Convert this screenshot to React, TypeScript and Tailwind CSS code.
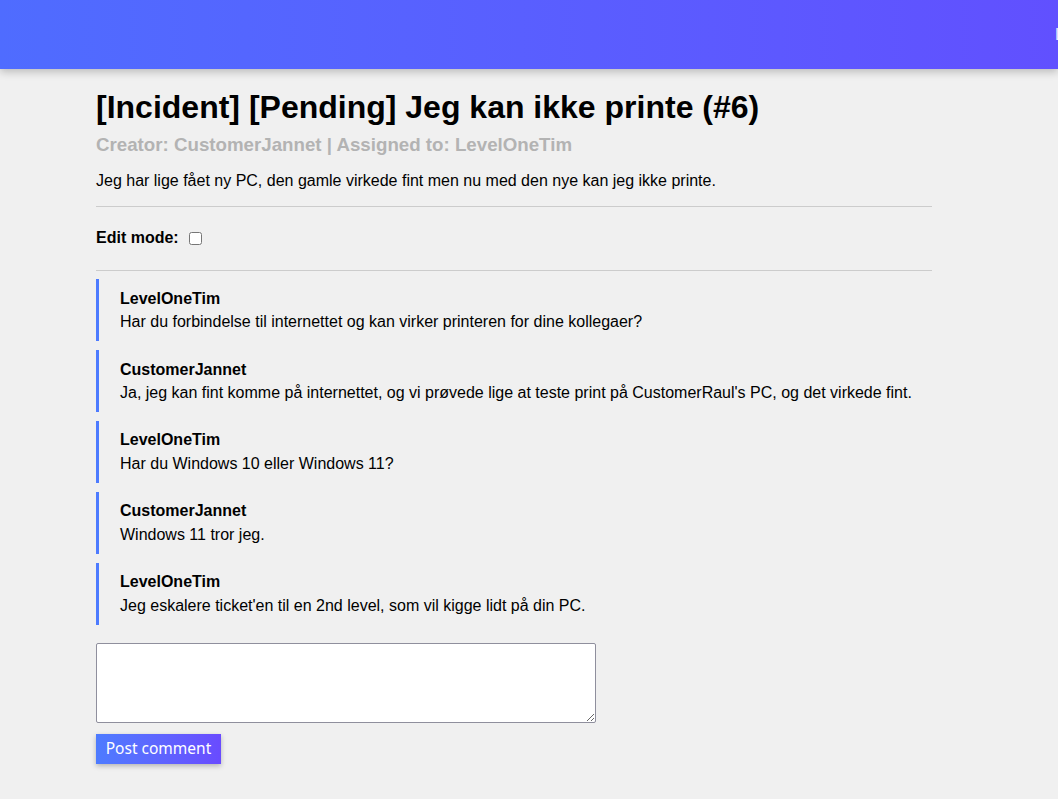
import React, { useState } from "react";

type Comment = {
  author: string;
  text: string;
};

const comments: Comment[] = [
  {
    author: "LevelOneTim",
    text: "Har du forbindelse til internettet og kan virker printeren for dine kollegaer?",
  },
  {
    author: "CustomerJannet",
    text: "Ja, jeg kan fint komme på internettet, og vi prøvede lige at teste print på CustomerRaul's PC, og det virkede fint.",
  },
  { author: "LevelOneTim", text: "Har du Windows 10 eller Windows 11?" },
  { author: "CustomerJannet", text: "Windows 11 tror jeg." },
  {
    author: "LevelOneTim",
    text: "Jeg eskalere ticket'en til en 2nd level, som vil kigge lidt på din PC.",
  },
];

const App = () => {
  const [editMode, setEditMode] = useState<boolean>(false);
  const [newComment, setNewComment] = useState<string>("");

  return (
    <div className="min-h-screen bg-[#f0f0f0] font-['Liberation_Sans',Arial,sans-serif] text-black overflow-hidden">
      <header className="h-[69px] flex items-center overflow-hidden bg-gradient-to-r from-[#4f6cff] to-[#6150ff] shadow-[0_3px_8px_rgba(0,0,0,0.22)]">
        <nav className="ml-auto mr-[-46px] whitespace-nowrap text-[16px] text-[#e6ecff]">
          Logout
        </nav>
      </header>

      <main className="ml-[96px] w-[836px] pt-[20px] pb-[36px]">
        <h1 className="text-[32px] leading-[37px] font-bold">
          [Incident] [Pending] Jeg kan ikke printe (#6)
        </h1>
        <h3 className="mt-[8px] text-[18.72px] leading-[21px] font-bold text-[#b3b3b3]">
          Creator: CustomerJannet | Assigned to: LevelOneTim
        </h3>
        <p className="mt-[17px] text-[16px] leading-[18px]">
          Jeg har lige fået ny PC, den gamle virkede fint men nu med den nye kan jeg ikke printe.
        </p>

        <hr className="mt-[16px] border-t border-[#cccccc]" />

        <div className="mt-[22px] flex items-center h-[18px]">
          <label htmlFor="edit-mode" className="text-[16px] font-bold">
            Edit mode:
          </label>
          <input
            id="edit-mode"
            type="checkbox"
            checked={editMode}
            onChange={(e) => setEditMode(e.target.checked)}
            className="ml-[10px] w-[13px] h-[13px]"
          />
        </div>

        <hr className="mt-[23px] border-t border-[#cccccc]" />

        <div className="mt-[8px] flex flex-col gap-[9px]">
          {comments.map((comment, i) => (
            <div
              key={i}
              className="border-l-[3px] border-[#4d7bff] pl-[21px] pt-[10.6px] pb-[9.5px]"
            >
              <div className="text-[16px] leading-[18.4px] font-bold">{comment.author}</div>
              <div className="mt-[5px] text-[16px] leading-[18.4px]">{comment.text}</div>
            </div>
          ))}
        </div>

        <textarea
          value={newComment}
          onChange={(e) => setNewComment(e.target.value)}
          className="mt-[18px] block w-[500px] h-[80px] bg-white border border-[#8f8f9d] rounded-[2px]"
        />

        <button className="mt-[11px] block h-[30px] w-[125px] bg-gradient-to-r from-[#4d7bff] to-[#694bff] text-white text-[15.5px] font-['Noto_Sans',sans-serif] shadow-[0_2px_5px_rgba(0,0,0,0.25)]">
          Post comment
        </button>
      </main>
    </div>
  );
};

export default App;
